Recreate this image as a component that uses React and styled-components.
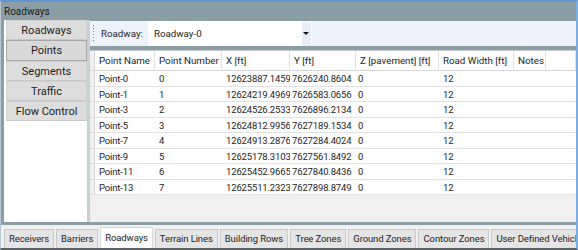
import React from "react";
import styled, { createGlobalStyle } from "styled-components";

const GlobalStyle = createGlobalStyle`
  html, body {
    margin: 0;
    padding: 0;
    background: #ffffff;
  }
  body {
    font-family: Roboto, "Noto Sans", sans-serif;
    color: #1e1e1e;
  }
`;

const Window = styled.div`
  width: 578px;
  height: 250px;
  box-sizing: border-box;
  border-top: 2px solid #5f95cf;
  border-right: 2px solid #7eaee0;
  border-left: 1px solid #b6c8d6;
  border-bottom: 2px solid #5d6266;
  background: #8b9ea5;
  display: flex;
  flex-direction: column;
  overflow: hidden;
`;

const TitleBar = styled.div`
  height: 18px;
  flex: none;
  padding-left: 3px;
  font-size: 10px;
  line-height: 20px;
  color: #1a1a1a;
`;

const Body = styled.div`
  flex: 1;
  display: flex;
  min-height: 0;
  padding: 0 0 0 3px;
`;

const SidePanel = styled.div`
  width: 86px;
  flex: none;
  background: #ffffff;
  padding: 0 0 0 2px;
  box-sizing: border-box;
  display: flex;
  flex-direction: column;
  border-right: 3px solid #c9d0d3;
`;

const SideButton = styled.div`
  height: 20.25px;
  flex: none;
  box-sizing: border-box;
  background: ${(p) => (p.$active ? "#d9d9d9" : "#dddddd")};
  border: 1px solid ${(p) => (p.$active ? "#a8a8a8" : "#d0d0d0")};
  border-bottom-color: ${(p) => (p.$active ? "#a8a8a8" : "#c8c8c8")};
  text-align: center;
  font-size: 11px;
  line-height: 20px;
  color: #1e1e1e;
`;

const Main = styled.div`
  flex: 1;
  min-width: 0;
  display: flex;
  flex-direction: column;
  gap: 4px;
  padding-top: 1px;
`;

const Toolbar = styled.div`
  height: 25px;
  flex: none;
  background: #eef3fb;
  display: flex;
  align-items: stretch;
  font-size: 9.75px;
`;

const Grip = styled.div`
  width: 3px;
  margin: 3px 4px 3px 2px;
  background-image: radial-gradient(circle, #6f7880 0.8px, transparent 1px);
  background-size: 3px 3px;
  background-repeat: repeat-y;
`;

const Label = styled.div`
  display: flex;
  align-items: center;
  padding: 0 5px 0 2px;
`;

const Combo = styled.div`
  width: 154px;
  background: #ffffff;
  display: flex;
  align-items: center;
  padding-left: 6px;
  box-sizing: border-box;
`;

const ComboArrow = styled.div`
  width: 9px;
  margin: 2px 0;
  background: #e6edf8;
  border-right: 1px solid #ffffff;
  display: flex;
  align-items: center;
  justify-content: center;
  &::after {
    content: "";
    border-left: 3px solid transparent;
    border-right: 3px solid transparent;
    border-top: 3px solid #111111;
  }
`;

const Grid = styled.div`
  flex: 1;
  background: #f0f0f0;
  display: grid;
  grid-template-columns: 5px 60px 67px 68px 66px 83px 75px 32px 1fr;
  grid-auto-rows: 15.5px;
  grid-template-rows: 20px;
  align-content: start;
  font-size: 9.75px;
  overflow: hidden;
  border-top: 1px solid #c5cbcf;
`;

const HeadCell = styled.div`
  background: #ffffff;
  border-right: 1px solid #e1e1e1;
  border-bottom: 1px solid #d5d5d5;
  padding-left: 4px;
  line-height: 19px;
  white-space: nowrap;
  overflow: hidden;
`;

const RowHead = styled.div`
  background: #f0f0f0;
  border-right: 1px solid #d5d5d5;
  border-bottom: 1px solid #dadada;
`;

const Cell = styled.div`
  background: #ffffff;
  border-bottom: 1px solid #e3e3e3;
  padding-left: ${(p) => (p.$tight ? "2px" : "4px")};
  font-size: 9.5px;
  letter-spacing: -0.15px;
  line-height: 15px;
  white-space: nowrap;
`;

const TabStrip = styled.div`
  height: 23px;
  flex: none;
  margin-top: 3px;
  background: #f0f0f0;
  display: flex;
  align-items: flex-end;
  padding-left: 3px;
  gap: 2px;
  overflow: hidden;
`;

const Tab = styled.div`
  flex: none;
  height: ${(p) => (p.$active ? "21px" : "19px")};
  box-sizing: border-box;
  padding: 0 4px;
  background: ${(p) => (p.$active ? "#ffffff" : "#e5e5e5")};
  border: 1px solid ${(p) => (p.$active ? "#d8d8d8" : "#c9c9c9")};
  border-bottom: none;
  font-size: 9.5px;
  letter-spacing: -0.1px;
  line-height: ${(p) => (p.$active ? "20px" : "17px")};
  white-space: nowrap;
  color: #1e1e1e;
`;

const sideItems = ["Roadways", "Points", "Segments", "Traffic", "Flow Control"];

const columns = [
  "Point Name",
  "Point Number",
  "X [ft]",
  "Y [ft]",
  "Z [pavement] [ft]",
  "Road Width [ft]",
  "Notes",
];

const points = [
  ["Point-0", "0", "12623887.1459", "7626240.8604", "0", "12"],
  ["Point-1", "1", "12624219.4969", "7626583.0656", "0", "12"],
  ["Point-3", "2", "12624526.2533", "7626896.2134", "0", "12"],
  ["Point-5", "3", "12624812.9956", "7627189.1534", "0", "12"],
  ["Point-7", "4", "12624913.2876", "7627284.4024", "0", "12"],
  ["Point-9", "5", "12625178.3103", "7627561.8492", "0", "12"],
  ["Point-11", "6", "12625452.9665", "7627840.8436", "0", "12"],
  ["Point-13", "7", "12625511.2323", "7627898.8749", "0", "12"],
];

const tabs = [
  "Receivers",
  "Barriers",
  "Roadways",
  "Terrain Lines",
  "Building Rows",
  "Tree Zones",
  "Ground Zones",
  "Contour Zones",
  "User Defined Vehicles",
];

export default function App() {
  return (
    <>
      <GlobalStyle />
      <Window>
        <TitleBar>Roadways</TitleBar>
        <Body>
          <SidePanel>
            {sideItems.map((item) => (
              <SideButton key={item} $active={item === "Points"}>
                {item}
              </SideButton>
            ))}
          </SidePanel>
          <Main>
            <Toolbar>
              <Grip />
              <Label>Roadway:</Label>
              <Combo>Roadway-0</Combo>
              <ComboArrow />
            </Toolbar>
            <Grid>
              <RowHead />
              {columns.map((c) => (
                <HeadCell key={c}>{c}</HeadCell>
              ))}
              <HeadCell />
              {points.map((row) => (
                <React.Fragment key={row[0]}>
                  <RowHead />
                  <Cell>{row[0]}</Cell>
                  <Cell>{row[1]}</Cell>
                  <Cell>{row[2]}</Cell>
                  <Cell $tight>{row[3]}</Cell>
                  <Cell $tight>{row[4]}</Cell>
                  <Cell>{row[5]}</Cell>
                  <Cell />
                  <Cell />
                </React.Fragment>
              ))}
            </Grid>
          </Main>
        </Body>
        <TabStrip>
          {tabs.map((t) => (
            <Tab key={t} $active={t === "Roadways"}>
              {t}
            </Tab>
          ))}
        </TabStrip>
      </Window>
    </>
  );
}
